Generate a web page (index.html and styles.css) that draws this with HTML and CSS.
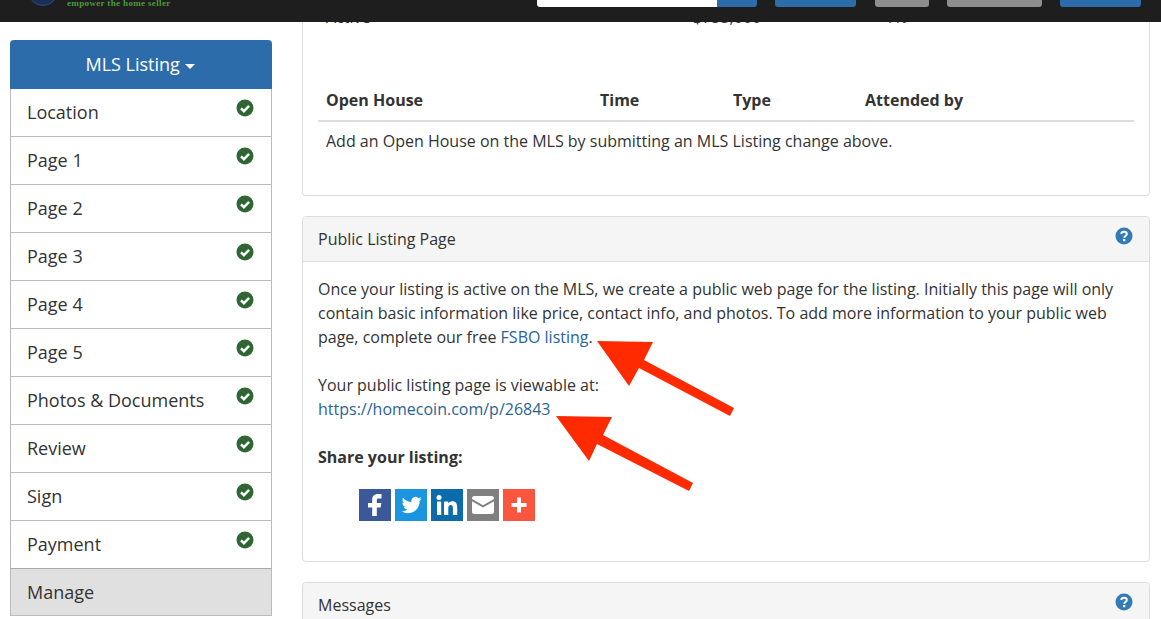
FILE: index.html
```html
<!DOCTYPE html>
<html lang="en">
<head>
    <meta charset="UTF-8">
    <meta name="viewport" content="width=device-width, initial-scale=1.0">
    <title>Public Listing Page</title>
    <link rel="stylesheet" href="styles.css">
</head>
<body>
    <!-- Fixed top bar, page is scrolled under it -->
    <div class="topbar">
        <div class="brand">
            <div class="brand-logo"></div>
            <div class="brand-tag">empower the home seller</div>
        </div>
        <div class="topbar-actions">
            <div class="search">
                <div class="search-input"></div>
                <div class="search-btn"></div>
            </div>
            <div class="top-btn blue btn-a"></div>
            <div class="top-btn grey btn-b"></div>
            <div class="top-btn grey btn-c"></div>
            <div class="top-btn blue btn-a"></div>
        </div>
    </div>

    <div class="page">
        <div class="sidebar">
            <div class="side-title">MLS Listing <span class="caret"></span></div>
            <div class="side-item">Location <svg class="check"><use href="#icon-check"/></svg></div>
            <div class="side-item">Page 1 <svg class="check"><use href="#icon-check"/></svg></div>
            <div class="side-item">Page 2 <svg class="check"><use href="#icon-check"/></svg></div>
            <div class="side-item">Page 3 <svg class="check"><use href="#icon-check"/></svg></div>
            <div class="side-item">Page 4 <svg class="check"><use href="#icon-check"/></svg></div>
            <div class="side-item">Page 5 <svg class="check"><use href="#icon-check"/></svg></div>
            <div class="side-item">Photos &amp; Documents <svg class="check"><use href="#icon-check"/></svg></div>
            <div class="side-item">Review <svg class="check"><use href="#icon-check"/></svg></div>
            <div class="side-item">Sign <svg class="check"><use href="#icon-check"/></svg></div>
            <div class="side-item">Payment <svg class="check"><use href="#icon-check"/></svg></div>
            <div class="side-item active">Manage</div>
        </div>

        <div class="content">
            <div class="panel panel-status">
                <div class="status-row">
                    <span class="status-a">Active</span>
                    <span class="status-b">$755,000</span>
                    <span class="status-c">1%</span>
                </div>
                <div class="oh-head">
                    <span class="oh-a">Open House</span>
                    <span class="oh-b">Time</span>
                    <span class="oh-c">Type</span>
                    <span>Attended by</span>
                </div>
                <div class="oh-row">Add an Open House on the MLS by submitting an MLS Listing change above.</div>
            </div>

            <div class="panel">
                <div class="panel-heading">
                    Public Listing Page
                    <svg class="help"><use href="#icon-help"/></svg>
                </div>
                <div class="panel-body">
                    <p>Once your listing is active on the MLS, we create a public web page for the listing. Initially this page will only contain basic information like price, contact info, and photos. To add more information to your public web page, complete our free <a href="#">FSBO listing</a>.</p>
                    <p>Your public listing page is viewable at:<br><a href="#">https://homecoin.com/p/26843</a></p>
                    <p class="share-label">Share your listing:</p>
                    <div class="share">
                        <div class="share-btn fb">
                            <svg viewBox="0 0 32 32"><path d="M22.500 5h-3.600c-3.600 0-5.700 2.200-5.700 5.700V14H9v4.400h4.200V27h4.600v-8.600h3.900l.6-4.400h-4.500v-2.700c0-1.300.5-1.900 1.900-1.900h2.800z" fill="#fff"/></svg>
                        </div>
                        <div class="share-btn tw">
                            <svg viewBox="-8 -7.200 38.400 38.400"><path d="M23.953 4.570a10 10 0 01-2.825.775 4.958 4.958 0 002.163-2.723c-.951.555-2.005.959-3.127 1.184a4.920 4.920 0 00-8.384 4.482C7.690 8.095 4.067 6.130 1.640 3.162a4.822 4.822 0 00-.666 2.475c0 1.710.870 3.213 2.188 4.096a4.904 4.904 0 01-2.228-.616v.060a4.923 4.923 0 003.946 4.827 4.996 4.996 0 01-2.212.085 4.936 4.936 0 004.604 3.417 9.867 9.867 0 01-6.102 2.105c-.390 0-.779-.023-1.170-.067a13.995 13.995 0 007.557 2.209c9.053 0 13.998-7.496 13.998-13.985 0-.210 0-.420-.015-.630A9.935 9.935 0 0024 4.590z" fill="#fff"/></svg>
                        </div>
                        <div class="share-btn li">
                            <svg viewBox="0 0 32 32"><g fill="#fff"><circle cx="8" cy="8.500" r="2.500"/><rect x="6" y="12.500" width="4.200" height="13.500"/><path d="M13 12.500h4.100v1.900c.8-1.300 2.300-2.200 4.200-2.200 3.600 0 4.900 2.300 4.900 6V26h-4.300v-6.900c0-2-.6-3.200-2.200-3.200s-2.400 1.300-2.400 3.200V26H13z"/></g></svg>
                        </div>
                        <div class="share-btn em">
                            <svg viewBox="0 0 32 32"><path d="M7.500 7h17A2.500 2.500 0 0127 9.500v.6l-11 6.200-11-6.200v-.6A2.500 2.500 0 017.500 7z" fill="#fff"/><path d="M5 12.300l11 6.200 11-6.200v10.200a2.500 2.500 0 01-2.500 2.500h-17A2.500 2.500 0 015 22.500z" fill="#fff"/></svg>
                        </div>
                        <div class="share-btn more">
                            <svg viewBox="0 0 32 32"><path d="M14 8.500h4V14h5.500v4H18v5.500h-4V18H8.500v-4H14z" fill="#fff"/></svg>
                        </div>
                    </div>
                </div>
            </div>

            <div class="panel">
                <div class="panel-heading">
                    Messages
                    <svg class="help"><use href="#icon-help"/></svg>
                </div>
            </div>
        </div>
    </div>

    <!-- Red annotation arrows drawn over the page -->
    <svg class="arrows" viewBox="0 0 1161 619">
        <polygon points="597,341 653,342 644,360 734,408 730,416 639,368 629,386" fill="#ff2a00"/>
        <polygon points="556,416 612,417 603,435 693,483 689,491 597,444 589,461" fill="#ff2a00"/>
    </svg>

    <svg class="defs">
        <symbol id="icon-check" viewBox="0 0 18 18">
            <circle cx="9" cy="9" r="8.500" fill="#2f6633"/>
            <path d="M5 9.300l2.900 2.900 5.200-5.300" fill="none" stroke="#fff" stroke-width="2.400"/>
        </symbol>
        <symbol id="icon-help" viewBox="0 0 18 18">
            <circle cx="9" cy="9" r="8.500" fill="#337ab7"/>
            <path d="M6.200 7c.2-1.500 1.300-2.200 2.800-2.200 1.600 0 2.800.9 2.800 2.200 0 2-2.500 1.900-2.600 3.800" fill="none" stroke="#fff" stroke-width="2"/>
            <rect x="8" y="12" width="2.300" height="2.200" fill="#fff"/>
        </symbol>
    </svg>
</body>
</html>
```

FILE: styles.css
```css
html, body {
    height: 100%;
    overflow: hidden;
}
body {
    font-family: 'Open Sans', 'Noto Sans', Arial, sans-serif;
    font-size: 16px;
    line-height: 24px;
    color: #333;
    margin: 0;
    background-color: white;
}
a {
    color: #2a6496;
    text-decoration: none;
}
p {
    margin: 0 0 24px;
}
.defs {
    display: none;
}

/* top bar */
.topbar {
    position: fixed;
    top: 0;
    left: 0;
    right: 0;
    height: 22px;
    background-color: #1e1e1e;
    overflow: hidden;
    display: flex;
    justify-content: space-between;
    align-items: flex-end;
    z-index: 5;
}
.brand {
    display: flex;
    align-items: flex-end;
    gap: 9px;
    padding: 0 0 16px 28px;
}
.brand-logo {
    width: 30px;
    height: 30px;
    border-radius: 50%;
    background-color: #1c2f55;
    border: 1px solid #2f4a80;
    box-sizing: border-box;
}
.brand-tag {
    font-family: 'Liberation Serif', serif;
    font-size: 9px;
    font-weight: bold;
    letter-spacing: 0.35px;
    line-height: 10px;
    color: #4d9a3d;
    margin-bottom: -2px;
}
.topbar-actions {
    display: flex;
    gap: 18px;
    padding: 0 20px 15px 0;
}
.search {
    display: flex;
    width: 220px;
    height: 30px;
}
.search-input {
    width: 180px;
    background-color: white;
    border-radius: 0 0 0 3px;
}
.search-btn {
    flex: 1;
    background-color: #2d6cab;
    border-radius: 0 0 3px 0;
}
.top-btn {
    height: 30px;
    border-radius: 0 0 3px 3px;
}
.blue {
    background-color: #2d6cab;
}
.grey {
    background-color: #8e8e8e;
}
.btn-a {
    width: 81px;
}
.btn-b {
    width: 54px;
    margin-left: 1px;
}
.btn-c {
    width: 95px;
}

/* layout */
.page {
    display: flex;
    gap: 30px;
    padding: 0 11px 0 10px;
}
.sidebar {
    width: 262px;
    flex-shrink: 0;
    margin-top: 40px;
}
.side-title {
    background-color: #2d6cab;
    color: white;
    font-size: 18px;
    line-height: 49px;
    text-align: center;
    padding-right: 2px;
    border-radius: 4px 4px 0 0;
}
.caret {
    display: inline-block;
    vertical-align: middle;
    border-top: 5px solid white;
    border-left: 5px solid transparent;
    border-right: 5px solid transparent;
}
.side-item {
    display: flex;
    justify-content: space-between;
    height: 48px;
    box-sizing: border-box;
    padding: 10px 17px 0 16px;
    font-size: 18px;
    line-height: 26px;
    background-color: white;
    border: 1px solid #bbb;
    border-top: none;
}
.side-item.active {
    background-color: #e0e0e0;
    border-top: 1px solid #aaa;
    margin-top: -1px;
}
.check {
    width: 18px;
    height: 18px;
}
.content {
    flex: 1;
    min-width: 0;
}

/* panels */
.panel {
    border: 1px solid #ddd;
    border-radius: 4px;
    margin-bottom: 20px;
    background-color: white;
}
.panel-heading {
    display: flex;
    justify-content: space-between;
    background-color: #f5f5f5;
    border-bottom: 1px solid #ddd;
    border-radius: 4px 4px 0 0;
    padding: 10px 15px;
}
.help {
    width: 18px;
    height: 18px;
    margin-right: 1px;
}
.panel-body {
    padding: 15px;
    height: 299px;
    box-sizing: border-box;
}
.panel-status {
    border-top: none;
    border-radius: 0 0 4px 4px;
    height: 196px;
    box-sizing: border-box;
    padding: 5px 15px 0;
    margin-bottom: 20px;
}
.status-row {
    display: flex;
    padding-left: 8px;
    margin-bottom: 59px;
}
.status-a {
    width: 367px;
}
.status-b {
    width: 192px;
}
.oh-head {
    display: flex;
    padding: 0 8px 8px;
    font-weight: bold;
    border-bottom: 2px solid #ddd;
}
.oh-a {
    width: 274px;
}
.oh-b {
    width: 133px;
}
.oh-c {
    width: 132px;
}
.oh-row {
    padding: 7px 8px;
}
.share-label {
    font-weight: bold;
    margin-bottom: 20px;
}
.share {
    display: flex;
    gap: 4px;
    padding-left: 41px;
}
.share-btn {
    width: 32px;
    height: 32px;
}
.share-btn svg {
    display: block;
    width: 32px;
    height: 32px;
}
.fb {
    background-color: #3b5998;
}
.tw {
    background-color: #1b95e0;
}
.li {
    background-color: #0c6cab;
}
.em {
    background-color: #7f7f7f;
}
.more {
    background-color: #f9553f;
}

/* annotation layer */
.arrows {
    position: fixed;
    top: 0;
    left: 0;
    width: 1161px;
    height: 619px;
    pointer-events: none;
    z-index: 4;
}
```
